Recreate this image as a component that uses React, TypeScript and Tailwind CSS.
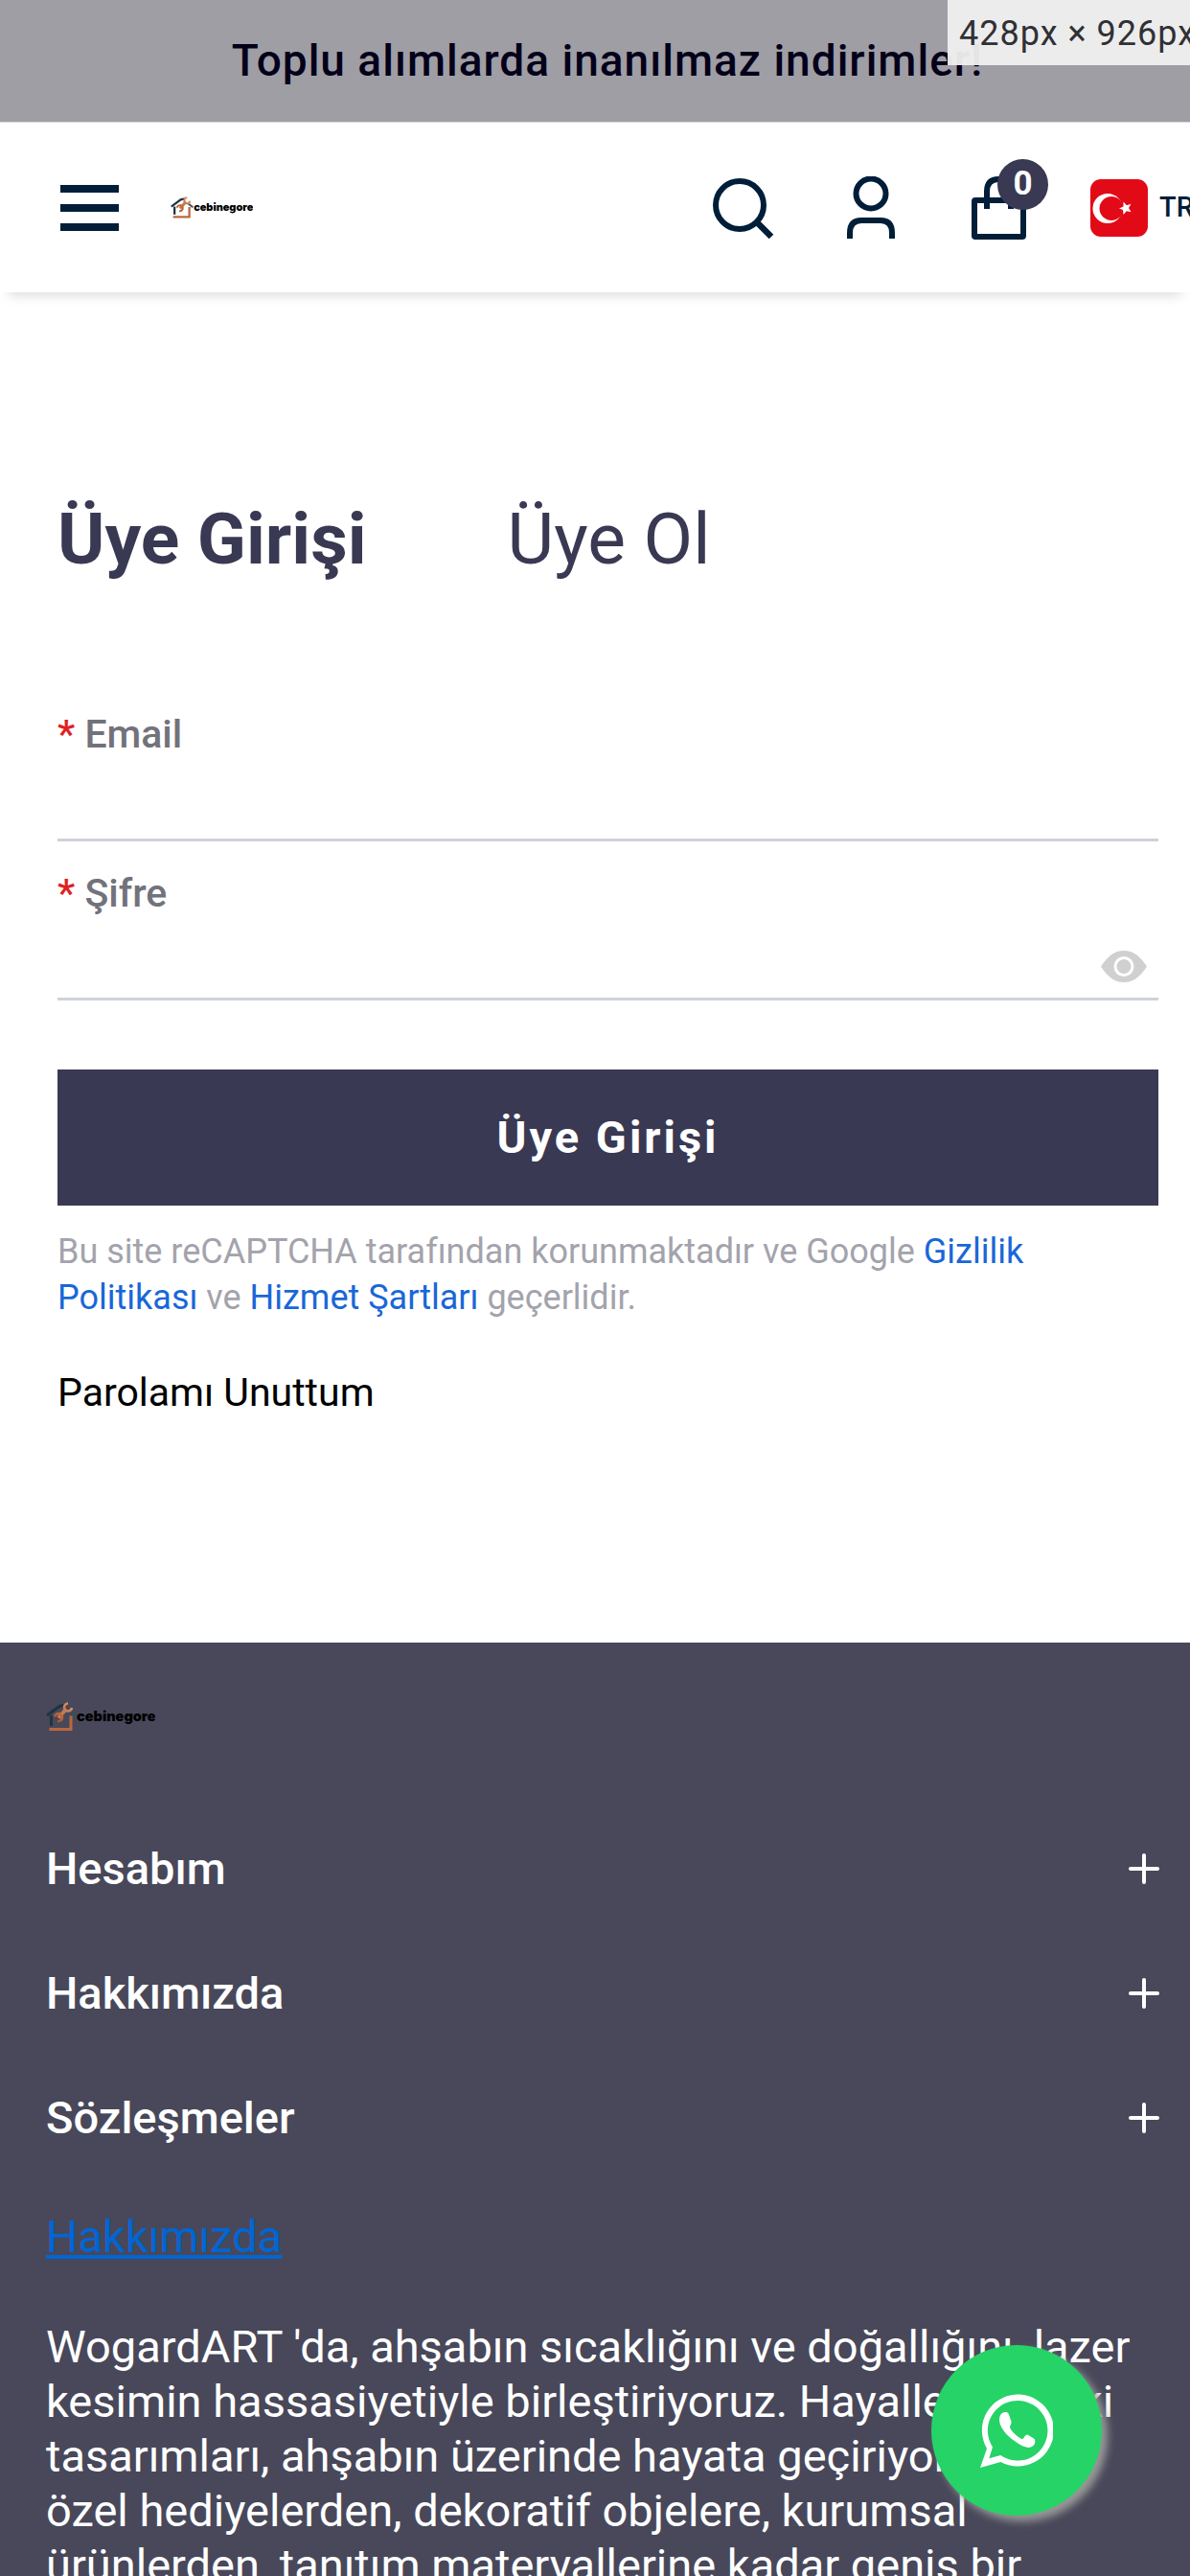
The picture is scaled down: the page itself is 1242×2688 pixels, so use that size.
import { useState } from "react";
import { Plus } from "lucide-react";

const menus = ["Hesabım", "Hakkımızda", "Sözleşmeler"];

function Logo({ className }: { className: string }) {
  return (
    <svg viewBox="0 0 114 31" className={className} role="img" aria-label="cebinegore">
      <defs>
        <linearGradient id="copper" x1="0" y1="1" x2="1" y2="0">
          <stop offset="0" stopColor="#a34f26" />
          <stop offset="1" stopColor="#e09a6c" />
        </linearGradient>
      </defs>
      {/* house */}
      <path d="M1 14L14 4.500L20 3" fill="none" stroke="#1f3540" strokeWidth="3" />
      <path d="M5.500 14V25" fill="none" stroke="#1f3540" strokeWidth="3" />
      <path d="M24 9.500L31 15" fill="none" stroke="#35505c" strokeWidth="2.500" />
      <path d="M3.500 28.500H26V14.500" fill="none" stroke="#b9683c" strokeWidth="3" />
      {/* wrench */}
      <path d="M13 16.500L21 7.500" stroke="#c67a4c" strokeWidth="4" />
      <path d="M23 1.500A4 4 0 1 0 27 6M9 15.500A4 4 0 1 1 12 20" fill="none" stroke="url(#copper)" strokeWidth="2.600" />
      <text x="32" y="20" fontFamily="Inter, sans-serif" fontWeight="900" fontSize="14.500" fill="#000">cebinegore</text>
    </svg>
  );
}

function Flag() {
  return (
    <svg viewBox="0 0 60 60" className="size-15" aria-hidden="true">
      <rect width="60" height="60" rx="11" fill="#e30a17" />
      <circle cx="18" cy="30.500" r="15.500" fill="#fff" />
      <circle cx="22" cy="30.500" r="12.500" fill="#e30a17" />
      <path d="M30 30.500L34.500 28.500L34.500 23.500L37.800 27.300L42.500 25.800L40 30L42.500 34.200L37.800 33.200L34.500 37L34 32Z" fill="#fff" />
    </svg>
  );
}

export default function App() {
  const [showPassword, setShowPassword] = useState(false);

  return (
    <div className="relative h-screen overflow-x-hidden overflow-y-auto bg-white font-[Roboto,sans-serif] text-black [scrollbar-width:none]">
      <div className="flex h-32 items-center justify-center border-b border-[#d9d8dd] bg-[#9f9ea4] pl-[26px] text-[46px] font-medium tracking-[1px] text-[#04001a]">
        Toplu alımlarda inanılmaz indirimler!
      </div>
      <div className="absolute top-0 right-0 h-[68px] w-[253px] overflow-hidden bg-[#f0f0f0]/95 pl-3 text-[36px] leading-[70px] tracking-[1px] whitespace-nowrap text-[#303035]">
        428px × 926px
      </div>

      <header className="flex h-[177px] items-center pl-[63px] text-[#001e38] shadow-[0_12px_12px_-9px_rgba(0,0,0,0.15)]">
        <button aria-label="Menü" className="flex w-[61px] flex-col gap-3">
          <span className="h-2 bg-current" />
          <span className="h-2 bg-current" />
          <span className="h-2 bg-current" />
        </button>
        <a href="#" className="ml-[54px]">
          <Logo className="w-[86px]" />
        </a>

        <div className="ml-auto flex shrink-0 items-center">
          <button aria-label="Ara">
            <svg viewBox="0 0 64 66" className="h-[66px] w-16" fill="none" stroke="currentColor" strokeWidth="6">
              <circle cx="28" cy="30" r="25" />
              <path d="M46 48L61 63" strokeWidth="6.500" />
            </svg>
          </button>
          <a href="#" aria-label="Hesabım" className="ml-[76px]">
            <svg viewBox="0 0 50 66" className="h-[66px] w-[50px]" fill="none" stroke="currentColor" strokeWidth="6">
              <circle cx="25" cy="18" r="15.500" />
              <path d="M3 65V59Q3 46 15 46H35Q47 46 47 59V65" />
            </svg>
          </a>
          <a href="#" aria-label="Sepet" className="relative ml-20">
            <svg viewBox="0 0 57 66" className="h-[66px] w-[57px]" fill="none" stroke="currentColor" strokeWidth="6">
              <rect x="3" y="25" width="51" height="38" rx="1" />
              <path d="M16 34V16Q16 3 28 3T41 16V34" />
            </svg>
            <span className="absolute -top-[18px] left-[27px] flex size-[53px] items-center justify-center rounded-full bg-[#393953] text-[35px] font-bold text-white">
              0
            </span>
          </a>
          <button className="-mr-1 ml-[67px] flex items-center gap-3 text-[29px] font-medium">
            <Flag />
            TR
          </button>
        </div>
      </header>

      <main className="pt-[212px] pr-[33px] pb-[237px] pl-[60px]">
        <div role="tablist" className="flex gap-[147px] text-[75px] leading-[90px] text-[#393953]">
          <button role="tab" aria-selected="true" className="font-bold">Üye Girişi</button>
          <button role="tab" aria-selected="false">Üye Ol</button>
        </div>

        <form className="mt-[135px]" onSubmit={(e) => e.preventDefault()}>
          <div className="flex h-[136px] flex-col border-b-3 border-[#ced2d8]">
            <label htmlFor="email" className="text-[41px] leading-[48px] font-medium text-[#72727b]">
              <span className="text-[#e02020]">*</span> Email
            </label>
            <input id="email" type="email" className="w-full flex-1 text-[41px] outline-none" />
          </div>
          <div className="flex h-[166px] flex-col border-b-3 border-[#ced2d8] pt-[30px]">
            <label htmlFor="password" className="text-[41px] leading-[48px] font-medium text-[#72727b]">
              <span className="text-[#e02020]">*</span> Şifre
            </label>
            <div className="flex flex-1 items-center pt-5 pr-3">
              <input id="password" type={showPassword ? "text" : "password"} className="h-12 w-full text-[41px] outline-none" />
              <button type="button" aria-label="Şifreyi göster" onClick={() => setShowPassword(!showPassword)}>
                <svg viewBox="0 0 48 33" className="h-[33px] w-12">
                  <path d="M0 16.500C7 6 14 0 24 0S41 6 48 16.500C41 27 34 33 24 33S7 27 0 16.500Z" fill="#d0d0d0" />
                  <circle cx="24" cy="16.500" r="9" fill="#d0d0d0" stroke="#fff" strokeWidth="3" />
                </svg>
              </button>
            </div>
          </div>
          <button type="submit" className="mt-[72px] h-[142px] w-full bg-[#393953] text-[47px] font-bold tracking-[3px] text-white">
            Üye Girişi
          </button>
        </form>

        <p className="mt-6 pr-20 text-[36px] leading-[48px] text-[#a3a3ac]">
          Bu site reCAPTCHA tarafından korunmaktadır ve Google{" "}
          <a href="#" className="text-[#1967d8]">Gizlilik Politikası</a> ve{" "}
          <a href="#" className="text-[#1967d8]">Hizmet Şartları</a> geçerlidir.
        </p>
        <a href="#" className="mt-[51px] block w-fit text-[41px] leading-[48px]">Parolamı Unuttum</a>
      </main>

      <footer className="bg-[#48485a] pt-[62px] pr-8 pl-12 text-white">
        <a href="#" className="block">
          <Logo className="w-[114px]" />
        </a>
        <div className="mt-[78px]">
          {menus.map((title) => (
            <button key={title} className="flex h-[130px] w-full items-center justify-between text-[47px] font-medium">
              {title}
              <Plus className="-mr-2 size-12" strokeWidth={2} />
            </button>
          ))}
        </div>
        <a href="#" className="mt-[30px] inline-block text-[47px] leading-[57px] text-[#0066d4] underline">Hakkımızda</a>
        <p className="mt-[58px] text-[47px] leading-[57px]">
          WogardART 'da, ahşabın sıcaklığını ve doğallığını, lazer kesimin hassasiyetiyle birleştiriyoruz. Hayallerinizdeki
          tasarımları, ahşabın üzerinde hayata geçiriyoruz.
          <br />
          özel hediyelerden, dekoratif objelere, kurumsal
          <br />
          ürünlerden, tanıtım materyallerine kadar geniş bir
        </p>
      </footer>

      <a
        href="#"
        aria-label="WhatsApp"
        className="fixed right-[92px] bottom-[63px] flex size-[178px] items-center justify-center rounded-full bg-[#25d366] shadow-[6px_6px_9px_#999]"
      >
        <svg viewBox="0 0 76 77" className="h-[77px] w-[76px]" fill="#fff">
          <path
            fillRule="evenodd"
            d="M7 57L0 77L21.500 71A37.500 37.500 0 1 0 7 57ZM13 55.500L9.300 67.300L21.300 64A31.300 31.300 0 1 0 13 55.500Z"
          />
          <path d="M26 19C22 19 20 23 20 27C20 34 27 43 35 48.500C42 54 49 57 53 55.500C57 54 58 50 57 47.500C56.500 46.500 50 43 49 42.500C47.500 42 46 45.500 44.500 47C42 47.500 33 40 31 35C30.500 33.500 33 31.500 32.500 29C32 27 30 21.500 29.500 20.500C29 19 28 19 26 19Z" />
        </svg>
      </a>
    </div>
  );
}
